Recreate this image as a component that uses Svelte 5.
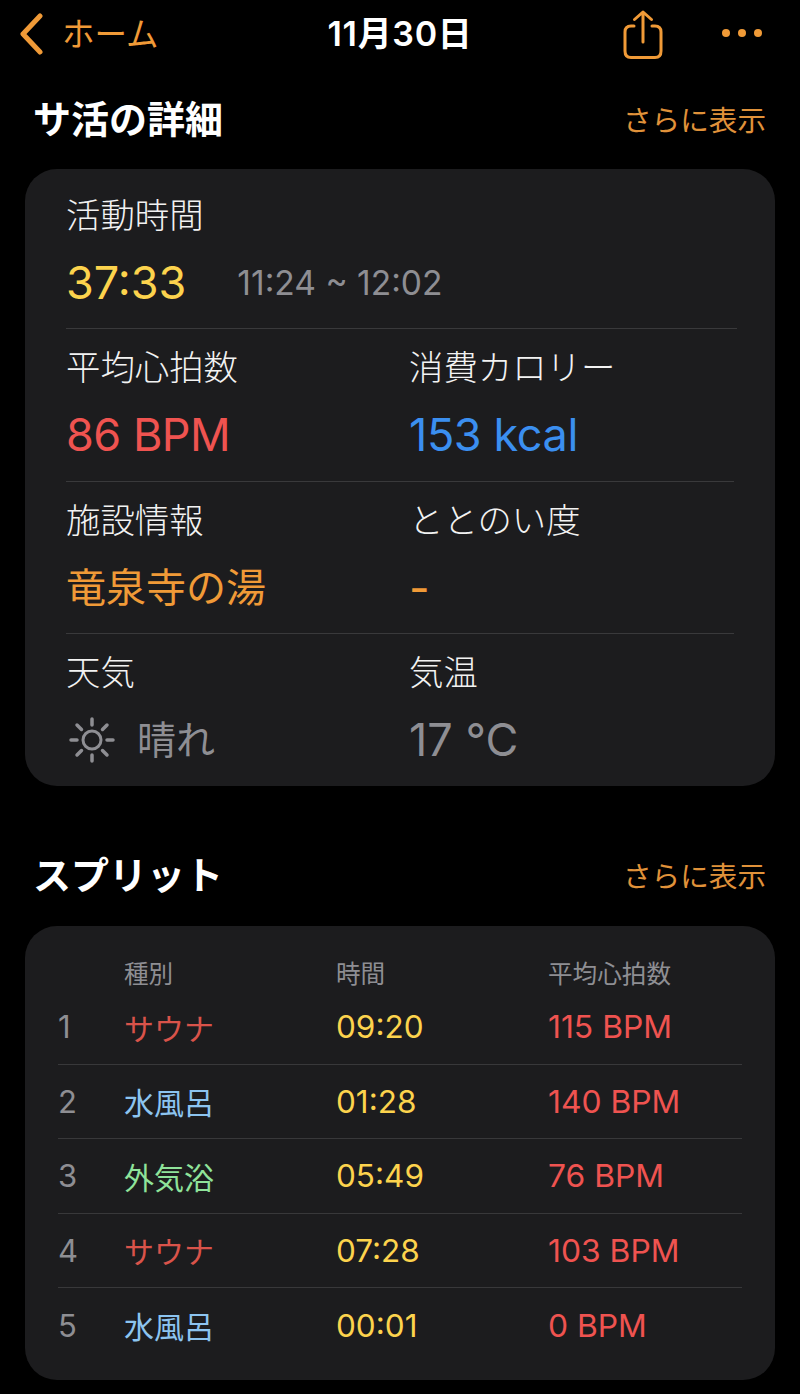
<script lang="ts">
	const splits = [
		{ n: 1, kind: 'サウナ', tone: 'sauna', time: '09:20', bpm: 115 },
		{ n: 2, kind: '水風呂', tone: 'water', time: '01:28', bpm: 140 },
		{ n: 3, kind: '外気浴', tone: 'air', time: '05:49', bpm: 76 },
		{ n: 4, kind: 'サウナ', tone: 'sauna', time: '07:28', bpm: 103 },
		{ n: 5, kind: '水風呂', tone: 'water', time: '00:01', bpm: 0 }
	];
</script>

<div class="page">
	<header class="nav">
		<div class="back">
			<svg width="26" height="42" viewBox="0 0 26 42" fill="none">
				<path d="M22 3 L5 21 L22 39" stroke="currentColor" stroke-width="5" stroke-linecap="round" stroke-linejoin="round" />
			</svg>
			<span>ホーム</span>
		</div>
		<div class="date">11月30日</div>
		<div class="actions">
			<svg width="42" height="50" viewBox="0 0 42 50" fill="none" stroke="currentColor" stroke-width="3" stroke-linecap="round" stroke-linejoin="round">
				<path d="M12 17 H9 Q3 17 3 23 V42 Q3 48.5 9 48.5 H33 Q39 48.5 39 42 V23 Q39 17 33 17 H30" />
				<path d="M21 33 V3 M12.5 10.5 L21 3 L29.5 10.5" />
			</svg>
			<div class="dots"><i></i><i></i><i></i></div>
		</div>
	</header>

	<section class="head first">
		<h2>サ活の詳細</h2>
		<span class="more">さらに表示</span>
	</section>

	<div class="card detail">
		<div class="row wide">
			<div class="label">活動時間</div>
			<div class="value"><span class="yellow">37:33</span><span class="range">11:24 ~ 12:02</span></div>
		</div>
		<div class="row two">
			<div><div class="label">平均心拍数</div><div class="value red">86 BPM</div></div>
			<div><div class="label">消費カロリー</div><div class="value blue">153 kcal</div></div>
		</div>
		<div class="row two">
			<div><div class="label">施設情報</div><div class="value orange cjk">竜泉寺の湯</div></div>
			<div><div class="label">ととのい度</div><div class="value orange">-</div></div>
		</div>
		<div class="row two last">
			<div>
				<div class="label">天気</div>
				<div class="value gray weather">
					<svg width="48" height="48" viewBox="0 0 48 48" fill="none" stroke="currentColor" stroke-linecap="round">
						<circle cx="24" cy="24" r="9" stroke-width="3" />
						<path stroke-width="3.5" d="M24 3 V9 M24 39 V45 M3 24 H9 M39 24 H45 M9 9 L13.5 13.5 M34.5 34.5 L39 39 M9 39 L13.5 34.5 M34.5 13.5 L39 9" />
					</svg>
					<span class="sky">晴れ</span>
				</div>
			</div>
			<div><div class="label">気温</div><div class="value gray">17 °C</div></div>
		</div>
	</div>

	<section class="head second">
		<h2>スプリット</h2>
		<span class="more">さらに表示</span>
	</section>

	<div class="card splits">
		<div class="thead">
			<span></span><span>種別</span><span>時間</span><span>平均心拍数</span>
		</div>
		{#each splits as s}
			<div class="tr">
				<span class="num">{s.n}</span>
				<span class={s.tone}>{s.kind}</span>
				<span class="time">{s.time}</span>
				<span class="bpm">{s.bpm} BPM</span>
			</div>
		{/each}
	</div>
</div>

<style>
	:global(body) {
		margin: 0;
		background: #000;
	}

	.page {
		width: 800px;
		height: 1394px;
		overflow: hidden;
		background: #000;
		color: #fff;
		font-family: Inter, 'Noto Sans CJK JP', sans-serif;
	}

	.nav {
		display: grid;
		grid-template-columns: 1fr auto 1fr;
		align-items: center;
		height: 68px;
		padding: 0 38px;
	}

	.back {
		display: flex;
		align-items: center;
		gap: 18px;
		margin-left: -20px;
		color: #f09a37;
		font-size: 32.5px;
	}

	.back span {
		margin-top: -6px;
	}

	.date {
		margin-top: -6px;
		font-size: 34px;
		font-weight: 600;
		letter-spacing: 0.7px;
	}

	.actions {
		display: flex;
		justify-content: flex-end;
		align-items: center;
		gap: 58px;
		color: #f09a37;
	}

	.dots {
		display: flex;
		gap: 8px;
		margin-top: -2px;
	}

	.dots i {
		width: 8px;
		height: 8px;
		border-radius: 50%;
		background: currentColor;
	}

	.head {
		display: flex;
		justify-content: space-between;
		align-items: center;
		padding: 0 34px;
		height: 60px;
	}

	.first {
		margin-top: 20px;
	}

	.second {
		margin-top: 58px;
	}

	h2 {
		margin: -4px 0 0 -1px;
		font-size: 38px;
		font-weight: 700;
	}

	.more {
		font-size: 28.6px;
		color: #e0923a;
	}

	.card {
		margin: 0 25px;
		background: #1c1c1e;
		border-radius: 32px;
	}

	.detail {
		margin-top: 21px;
		height: 617px;
		padding: 0 41px;
		box-sizing: border-box;
	}

	.row {
		height: 152.5px;
		box-sizing: border-box;
		border-bottom: 1px solid #39393b;
		padding-top: 16px;
	}

	.row.wide {
		height: 160px;
		padding-top: 24px;
		margin-right: -3px;
	}

	.row.last {
		border-bottom: 0;
	}

	.row.two {
		display: grid;
		grid-template-columns: 343px 1fr;
	}

	.label {
		font-size: 34.4px;
		line-height: 46px;
		font-weight: 300;
		color: #f2f2f2;
	}

	.value {
		margin-top: 19px;
		font-size: 45px;
		line-height: 50px;
		display: flex;
		align-items: center;
	}

	.cjk {
		font-size: 40px;
	}

	.sky {
		font-size: 39px;
	}

	.yellow {
		color: #fcd34d;
	}

	.red {
		color: #ef5350;
		letter-spacing: -0.5px;
	}

	.blue {
		color: #3b8ff0;
		letter-spacing: -0.4px;
	}

	.orange {
		color: #f09a37;
	}

	.gray {
		color: #8e8e93;
	}

	.range {
		margin-left: 51px;
		font-size: 33.6px;
		color: #8e8e93;
	}

	.weather {
		gap: 21px;
	}

	.weather svg {
		margin-left: 2px;
	}

	.splits {
		margin-top: 22px;
		height: 454px;
		padding: 32px 33px 0;
		box-sizing: border-box;
	}

	.thead,
	.tr {
		display: grid;
		grid-template-columns: 66px 212px 212px 1fr;
	}

	.thead {
		font-size: 24.6px;
		line-height: 32px;
		color: #8e8e93;
	}

	.tr {
		align-items: center;
		height: 74.5px;
		box-sizing: border-box;
		font-size: 30px;
		border-bottom: 1px solid #38383a;
	}

	.tr:last-child {
		border-bottom: 0;
	}

	.num {
		color: #8e8e93;
		font-size: 31px;
	}

	.sauna {
		color: #d9534a;
	}

	.water {
		color: #8cc4f0;
	}

	.air {
		color: #8fe39a;
	}

	.time {
		color: #fcd34d;
		font-size: 31.5px;
	}

	.bpm {
		color: #ef5350;
		font-size: 31.8px;
	}
</style>
